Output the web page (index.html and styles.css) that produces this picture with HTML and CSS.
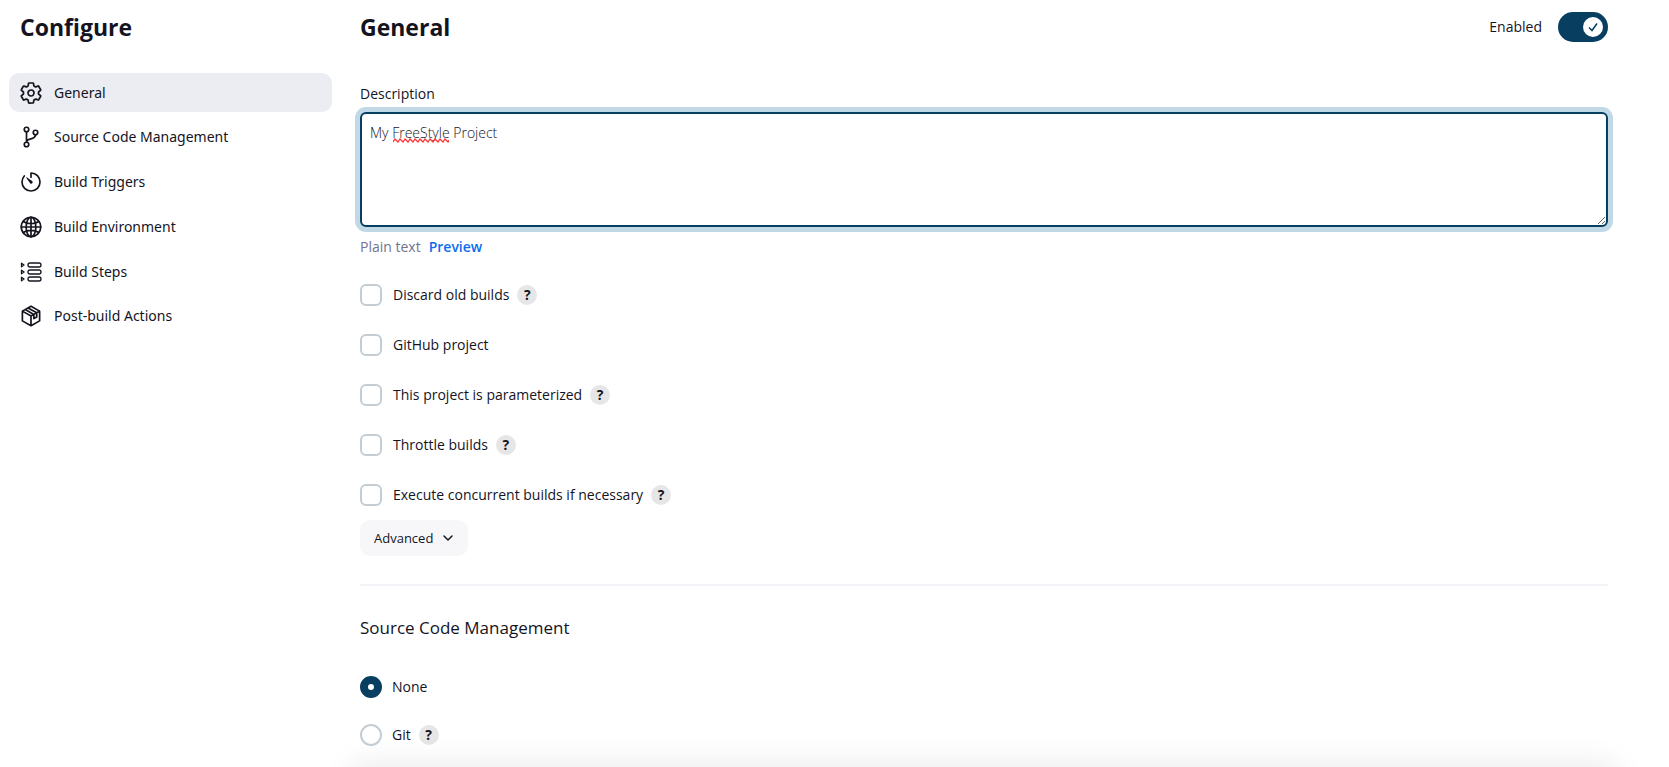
FILE: index.html
```html
<!DOCTYPE html>
<html lang="en">
<head>
<meta charset="utf-8">
<title>Configure</title>
<link rel="stylesheet" href="styles.css">
</head>
<body>
<div class="page">
  <aside class="sidebar">
    <h1 class="title">Configure</h1>
    <nav class="tasks">
      <a class="task task-active" href="#general">
        <svg class="icon" viewBox="0 0 512 512"><path d="M262.29 192.31a64 64 0 1057.4 57.4 64.13 64.13 0 00-57.4-57.4zM416.39 256a154.34 154.34 0 01-1.53 20.79l45.21 35.46a10.81 10.81 0 012.45 13.75l-42.77 74a10.81 10.81 0 01-13.14 4.59l-44.9-18.08a16.11 16.11 0 00-15.17 1.75A164.48 164.48 0 01325 400.8a15.94 15.94 0 00-8.82 12.14l-6.73 47.89a11.08 11.08 0 01-10.68 9.17h-85.54a11.11 11.11 0 01-10.69-8.87l-6.72-47.82a16.07 16.07 0 00-9-12.22 155.3 155.3 0 01-21.46-12.57 16 16 0 00-15.11-1.71l-44.89 18.07a10.81 10.81 0 01-13.14-4.58l-42.77-74a10.8 10.8 0 012.45-13.75l38.21-30a16.05 16.05 0 006-14.08c-.36-4.17-.58-8.33-.58-12.5s.21-8.27.58-12.35a16 16 0 00-6.07-13.94l-38.19-30A10.81 10.81 0 0149.48 186l42.77-74a10.81 10.81 0 0113.14-4.59l44.9 18.08a16.11 16.11 0 0015.17-1.75A164.48 164.48 0 01187 111.2a15.94 15.94 0 008.82-12.14l6.73-47.89A11.08 11.08 0 01213.23 42h85.54a11.11 11.11 0 0110.69 8.87l6.72 47.82a16.07 16.07 0 009 12.22 155.3 155.3 0 0121.46 12.57 16 16 0 0015.11 1.71l44.89-18.07a10.81 10.81 0 0113.14 4.58l42.77 74a10.8 10.8 0 01-2.45 13.75l-38.21 30a16.05 16.05 0 00-6.05 14.08c.33 4.14.55 8.3.55 12.47z"/></svg>
        General
      </a>
      <a class="task" href="#scm">
        <svg class="icon" viewBox="0 0 512 512"><circle cx="160" cy="96" r="48"/><circle cx="160" cy="416" r="48"/><circle cx="352" cy="160" r="48"/><path d="M160 368V144M352 208c0 128-192 48-192 160"/></svg>
        Source Code Management
      </a>
      <a class="task" href="#triggers">
        <svg class="icon" viewBox="0 0 512 512"><path d="M112.91 128A191.85 191.85 0 0064 254c-1.18 106.35 85.65 193.8 192 194 106.2.2 192-85.83 192-192 0-104.54-83.55-189.61-187.5-192a4.36 4.36 0 00-4.5 4.37V152"/><path class="solid" d="M233.38 278.63l-79-113a8.13 8.13 0 0111.32-11.32l113 79a32.5 32.5 0 01-37.25 53.26 33.21 33.21 0 01-8.07-7.94z"/></svg>
        Build Triggers
      </a>
      <a class="task" href="#environment">
        <svg class="icon" viewBox="0 0 512 512"><circle cx="256" cy="256" r="208"/><ellipse cx="256" cy="256" rx="104" ry="208"/><path d="M256 48v416M48 256h416M90 138c46 32 104 48 166 48s120-16 166-48M90 374c46-32 104-48 166-48s120 16 166 48"/></svg>
        Build Environment
      </a>
      <a class="task" href="#steps">
        <svg class="icon icon-thin" viewBox="0 0 24 24"><rect x="9" y="3" width="13" height="4" rx="2"/><rect x="9" y="10" width="13" height="4" rx="2"/><rect x="9" y="17" width="13" height="4" rx="2"/><path d="M2.500 3.200l2.500 1.800-2.500 1.800zM2.500 10.200l2.500 1.800-2.500 1.800zM2.500 17.200l2.500 1.800-2.500 1.800z"/></svg>
        Build Steps
      </a>
      <a class="task" href="#post-build">
        <svg class="icon" viewBox="0 0 512 512"><path d="M256 48l184 104v208L256 464 72 360V152zM72 152l184 104 184-104M256 256v208M133 118l184 104M194 83l184 104v90l-61 34v-89"/></svg>
        Post-build Actions
      </a>
    </nav>
  </aside>

  <main class="main">
    <header class="section-head" id="general">
      <h2 class="title">General</h2>
      <label class="toggle">
        Enabled
        <input class="toggle-input" type="checkbox" checked>
        <span class="switch"><span class="knob"><svg class="check" viewBox="0 0 20 20"><path d="M6 10.500l3 3 5-7"/></svg></span></span>
      </label>
    </header>

    <label class="field-label" for="description">Description</label>
    <div class="editor">
      <textarea class="textarea" id="description">My FreeStyle Project</textarea>
      <svg class="squiggle" viewBox="0 0 56 5"><path d="M0 4l2-3 3 3 2-3 3 3 2-3 3 3 2-3 3 3 2-3 3 3 2-3 3 3 2-3 3 3 2-3 3 3 2-3 3 3 2-3 3 3 2-3 3 3 2-3"/></svg>
    </div>
    <div class="preview">Plain text <a class="preview-link" href="#preview">Preview</a></div>

    <div class="options">
      <div class="option"><label class="choice"><input class="box" type="checkbox">Discard old builds</label><button class="help" type="button">?</button></div>
      <div class="option"><label class="choice"><input class="box" type="checkbox">GitHub project</label></div>
      <div class="option"><label class="choice"><input class="box" type="checkbox">This project is parameterized</label><button class="help" type="button">?</button></div>
      <div class="option"><label class="choice"><input class="box" type="checkbox">Throttle builds</label><button class="help" type="button">?</button></div>
      <div class="option"><label class="choice"><input class="box" type="checkbox">Execute concurrent builds if necessary</label><button class="help" type="button">?</button></div>
    </div>

    <button class="advanced" type="button">Advanced
      <svg class="chevron" viewBox="0 0 12 12"><path d="M2 4l4 4 4-4"/></svg>
    </button>

    <section class="scm" id="scm">
      <h3 class="subtitle">Source Code Management</h3>
      <div class="radios">
        <div class="option"><label class="choice"><input class="radio" type="radio" name="scm" checked>None</label></div>
        <div class="option"><label class="choice"><input class="radio" type="radio" name="scm">Git</label><button class="help" type="button">?</button></div>
      </div>
    </section>
  </main>
</div>
<div class="bottom-bar"></div>
</body>
</html>
```
FILE: styles.css
```css
* {
  box-sizing: border-box;
}

body {
  margin: 0;
  background: #fff;
  color: #14141f;
  font-family: "Open Sans", "Noto Sans", sans-serif;
  font-size: 14px;
  font-weight: 450;
  line-height: 20px;
}

button,
input,
textarea {
  margin: 0;
  font: inherit;
  color: inherit;
}

.page {
  display: grid;
  grid-template-columns: 323px minmax(0, 1fr);
  gap: 28px;
  padding: 11px 61px 20px 9px;
}

.title {
  margin: 0;
  font-size: 23px;
  font-weight: 700;
  line-height: 32px;
}

.sidebar .title {
  padding-left: 11px;
}

.tasks {
  display: flex;
  flex-direction: column;
  justify-content: space-between;
  height: 263px;
  margin-top: 30px;
}

.task {
  display: flex;
  align-items: center;
  gap: 11px;
  height: 39px;
  padding-left: 10px;
  border-radius: 10px;
  color: inherit;
  font-family: "Noto Sans", "Open Sans", sans-serif;
  text-decoration: none;
}

.task-active {
  background: #ecedf3;
}

.icon {
  width: 24px;
  height: 24px;
  fill: none;
  stroke: currentColor;
  stroke-width: 36;
  stroke-linecap: round;
  stroke-linejoin: round;
}

.icon-thin {
  stroke-width: 1.300;
}

.solid {
  fill: currentColor;
  stroke: none;
}

.section-head {
  display: flex;
  align-items: center;
  justify-content: space-between;
}

.toggle {
  position: relative;
  display: flex;
  align-items: center;
  gap: 16px;
}

.toggle-input {
  position: absolute;
  opacity: 0;
}

.switch {
  display: flex;
  justify-content: flex-end;
  width: 50px;
  padding: 5px;
  border-radius: 15px;
  background: #083f61;
}

.knob {
  width: 20px;
  height: 20px;
  border-radius: 50%;
  background: #fff;
}

.check {
  display: block;
  fill: none;
  stroke: #083f61;
  stroke-width: 1.500;
}

.field-label {
  display: block;
  margin: 41px 0 8px;
}

.editor {
  position: relative;
}

.textarea {
  display: block;
  width: 100%;
  height: 115px;
  padding: 9px 8px;
  border: 2px solid #083f61;
  border-radius: 6px;
  outline: none;
  box-shadow: 0 0 0 5px #c1d9e7;
  font-weight: 300;
  resize: vertical;
}

.squiggle {
  position: absolute;
  top: 26px;
  left: 33px;
  width: 56px;
  height: 5px;
  fill: none;
  stroke: #f33;
  stroke-width: 1.300;
}

.preview {
  display: flex;
  gap: 8px;
  margin-top: 10px;
  color: #73738c;
  font-weight: 400;
}

.preview-link {
  color: #0b6cf0;
  font-weight: 600;
  text-decoration: none;
}

.options {
  display: grid;
  gap: 28px;
  margin-top: 27px;
}

.option {
  display: flex;
  align-items: center;
  gap: 8px;
  height: 22px;
}

.choice {
  display: flex;
  align-items: center;
  gap: 11px;
}

.radios .choice {
  gap: 10px;
}

.box,
.radio {
  width: 22px;
  height: 22px;
  border: 2px solid #c3cdd3;
  border-radius: 6px;
  background: #fff;
  appearance: none;
}

.radio {
  border-radius: 50%;
}

.radio:checked {
  border: 8px solid #083f61;
}

.help {
  width: 20px;
  height: 20px;
  padding: 0;
  border: 0;
  border-radius: 50%;
  background: #e6e6e6;
  font-size: 14px;
  font-weight: 700;
  line-height: 20px;
}

.advanced {
  display: flex;
  align-items: center;
  gap: 9px;
  height: 36px;
  margin-top: 14px;
  padding: 0 14px;
  border: 0;
  border-radius: 10px;
  background: #f7f7fa;
  font-size: 13px;
}

.chevron {
  width: 12px;
  height: 12px;
  fill: none;
  stroke: currentColor;
  stroke-width: 1.500;
  stroke-linecap: round;
  stroke-linejoin: round;
}

.scm {
  margin-top: 28px;
  padding-top: 30px;
  border-top: 2px solid #f2f2f7;
}

.subtitle {
  margin: 0;
  font-size: 17px;
  font-weight: 500;
  line-height: 24px;
}

.radios {
  display: grid;
  gap: 26px;
  margin-top: 36px;
}

.bottom-bar {
  position: fixed;
  right: 51px;
  bottom: -64px;
  left: 350px;
  height: 64px;
  border-radius: 10px;
  box-shadow: 0 -4px 30px rgba(0, 0, 0, 0.08);
}
```
